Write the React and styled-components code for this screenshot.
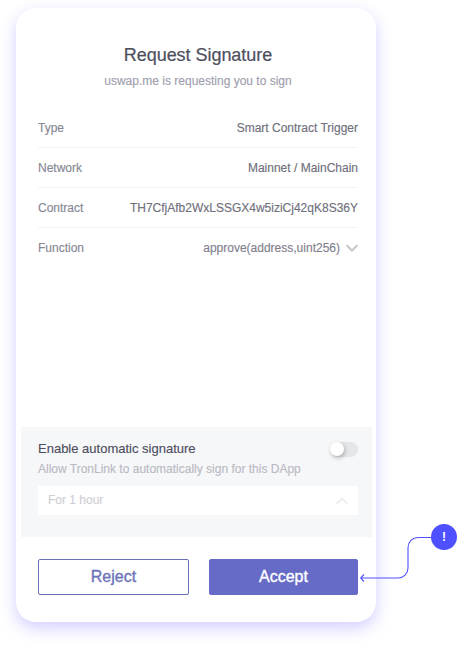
import React from 'react';
import styled, { createGlobalStyle } from 'styled-components';

const GlobalStyle = createGlobalStyle`
  * { box-sizing: border-box; }
  html { overflow: hidden; }
  body {
    margin: 0;
    background: #fff;
    font-family: "Liberation Sans", Arial, sans-serif;
  }
`;

const Page = styled.main`
  position: relative;
  width: 457px;
  height: 646px;
  padding: 8px 0 0 16px;
  overflow: hidden;
`;

const Card = styled.section`
  display: flex;
  flex-direction: column;
  width: 360px;
  height: 614px;
  padding: 34px 4px 27px 5px;
  border-radius: 20px;
  background: #fff;
  box-shadow: 0 6px 16px rgba(78, 70, 255, 0.26);
`;

const Header = styled.header`
  display: flex;
  flex-direction: column;
  align-items: center;
  height: 66px;
  padding-left: 3px;
`;

const Title = styled.h1`
  margin: 0;
  font-size: 18px;
  font-weight: 400;
  line-height: 26px;
  letter-spacing: -0.04px;
  color: #4e4f5e;
  -webkit-text-stroke: 0.2px currentColor;
`;

const Subtitle = styled.p`
  margin: 4px 0 0;
  font-size: 12px;
  line-height: 18px;
  color: #a0a0ae;
  -webkit-text-stroke: 0.15px currentColor;
`;

const Details = styled.dl`
  margin: 0;
  padding: 0 14px 0 17px;
`;

const DetailRow = styled.div`
  display: flex;
  align-items: center;
  justify-content: space-between;
  height: 40px;
  border-bottom: 1px solid #f3f4f6;
  font-size: 12px;
  -webkit-text-stroke: 0.15px currentColor;

  &:last-child { border-bottom-color: transparent; }
`;

const Label = styled.dt`
  color: #878794;
`;

const Value = styled.dd`
  display: flex;
  align-items: center;
  gap: 6px;
  margin: 0;
  color: ${({ $muted }) => ($muted ? '#81818d' : '#70707b')};
`;

const AutoPanel = styled.section`
  height: 110px;
  margin-top: auto;
  padding: 13px 14px 0 17px;
  background: #f6f7f9;
`;

const PanelTop = styled.div`
  display: flex;
  justify-content: space-between;
  height: 18px;
`;

const PanelTitle = styled.h2`
  margin: 0;
  font-size: 13px;
  font-weight: 400;
  line-height: 18px;
  color: #4e4f5e;
  -webkit-text-stroke: 0.15px currentColor;
`;

const Switch = styled.button`
  display: flex;
  align-items: flex-start;
  width: 28px;
  height: 15px;
  margin-top: 2px;
  padding: 0;
  border: 0;
  border-radius: 8px;
  background: #e5e6e8;
`;

const Knob = styled.span`
  display: block;
  width: 14px;
  height: 14px;
  border-radius: 50%;
  background: #fff;
  box-shadow: 1px 2px 4px rgba(0, 0, 0, 0.26);
`;

const PanelNote = styled.p`
  margin: 2px 0 0;
  font-size: 12px;
  line-height: 18px;
  color: #babac4;
  -webkit-text-stroke: 0.15px currentColor;
`;

const Select = styled.button`
  display: flex;
  align-items: center;
  justify-content: space-between;
  width: 100%;
  height: 29px;
  margin-top: 8px;
  padding: 0 10px 1px;
  border: 0;
  background: #fff;
  font-family: inherit;
  font-size: 12px;
  color: #cfcfd6;
  -webkit-text-stroke: 0.15px currentColor;
`;

const Actions = styled.footer`
  display: flex;
  gap: 20px;
  margin: 22px 14px 0 17px;
`;

const ActionButton = styled.button`
  width: ${({ $primary }) => ($primary ? '149px' : '151px')};
  height: 36px;
  padding: 0 0 1px;
  border: 1px solid ${({ $primary }) => ($primary ? '#656bc7' : '#676fb5')};
  border-radius: 2px;
  background: ${({ $primary }) => ($primary ? '#656bc7' : '#fff')};
  color: ${({ $primary }) => ($primary ? '#fff' : '#6c73b9')};
  font-family: inherit;
  font-size: 16px;
  -webkit-text-stroke: 0.35px currentColor;
`;

const Icon = styled.svg`
  display: block;
  flex: none;
  overflow: visible;
`;

const Callout = styled.aside`
  position: absolute;
  left: 360px;
  top: 524px;
  display: flex;
  align-items: flex-start;
  width: 97px;
`;

const Badge = styled.span`
  display: flex;
  align-items: center;
  justify-content: center;
  width: 26px;
  height: 26px;
  border-radius: 50%;
  background: #4f50ff;
  color: #fff;
  font-size: 12px;
  font-weight: 700;
`;

const DETAILS = [
  { label: 'Type', value: 'Smart Contract Trigger' },
  { label: 'Network', value: 'Mainnet / MainChain' },
  { label: 'Contract', value: 'TH7CfjAfb2WxLSSGX4w5iziCj42qK8S36Y' },
  { label: 'Function', value: 'approve(address,uint256)', expandable: true },
];

function Chevron() {
  return (
    <Icon width="12" height="8" viewBox="0 0 12 8" fill="none">
      <path d="M.7 1.2l5.3 5.3 5.3-5.3" stroke="#c7c7cb" strokeWidth="2" />
    </Icon>
  );
}

export default function App() {
  return (
    <>
      <GlobalStyle />
      <Page>
        <Card>
          <Header>
            <Title>Request Signature</Title>
            <Subtitle>uswap.me is requesting you to sign</Subtitle>
          </Header>
          <Details>
            {DETAILS.map(({ label, value, expandable }) => (
              <DetailRow key={label}>
                <Label>{label}</Label>
                <Value $muted={expandable}>
                  {value}
                  {expandable && <Chevron />}
                </Value>
              </DetailRow>
            ))}
          </Details>
          <AutoPanel>
            <PanelTop>
              <PanelTitle>Enable automatic signature</PanelTitle>
              <Switch role="switch" aria-checked="false" aria-label="Enable automatic signature">
                <Knob />
              </Switch>
            </PanelTop>
            <PanelNote>Allow TronLink to automatically sign for this DApp</PanelNote>
            <Select>
              For 1 hour
              <Icon width="12" height="7" viewBox="0 0 12 7" fill="none">
                <path d="M.7 6.8L6 1.5l5.3 5.3" stroke="#ededef" strokeWidth="1.9" />
              </Icon>
            </Select>
          </AutoPanel>
          <Actions>
            <ActionButton>Reject</ActionButton>
            <ActionButton $primary>Accept</ActionButton>
          </Actions>
        </Card>
        <Callout>
          <Icon width="71" height="60" viewBox="0 0 71 60" fill="none" stroke="#4f50ff">
            <path d="M71 13.5H58A10 10 0 0 0 48 23.5V44A10 10 0 0 1 38 54H1" strokeWidth="1.1" />
            <path d="M4 50.5L.7 54 4 57.5" strokeWidth="1.1" />
          </Icon>
          <Badge>!</Badge>
        </Callout>
      </Page>
    </>
  );
}
